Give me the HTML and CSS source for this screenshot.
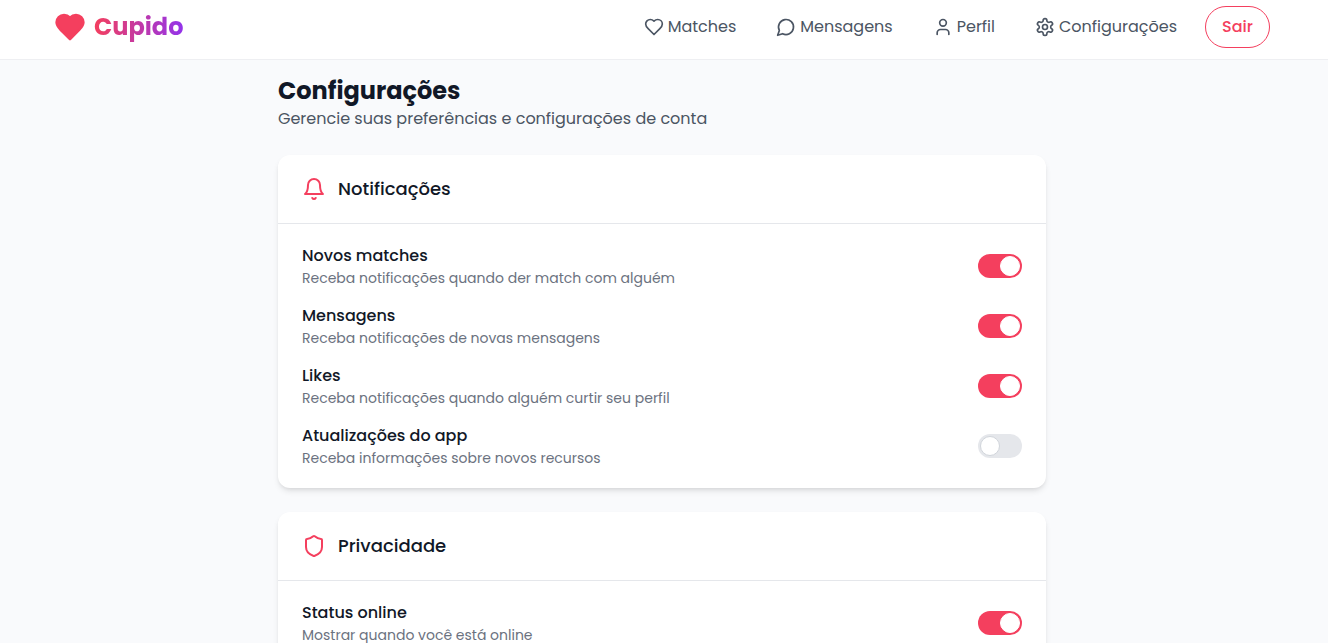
FILE: index.html
```html
<!DOCTYPE html>
<html lang="pt-BR">
<head>
<meta charset="utf-8">
<meta name="viewport" content="width=device-width, initial-scale=1">
<title>Cupido - Configurações</title>
<link rel="stylesheet" href="styles.css">
</head>
<body>
<header class="header">
  <div class="header-inner">
    <a class="brand" href="#">
      <svg class="brand-icon" viewBox="0 0 24 24" aria-hidden="true"><path d="M19 14c1.49-1.46 3-3.21 3-5.5A5.5 5.5 0 0 0 16.5 3c-1.76 0-3 .5-4.5 2-1.5-1.5-2.74-2-4.5-2A5.5 5.5 0 0 0 2 8.5c0 2.3 1.5 4.05 3 5.5l7 7Z"/></svg>
      <span class="brand-name">Cupido</span>
    </a>
    <nav class="nav">
      <a class="nav-link" href="#">
        <svg class="icon" viewBox="0 0 24 24" aria-hidden="true"><path d="M19 14c1.49-1.46 3-3.21 3-5.5A5.5 5.5 0 0 0 16.5 3c-1.76 0-3 .5-4.5 2-1.5-1.5-2.74-2-4.5-2A5.5 5.5 0 0 0 2 8.5c0 2.3 1.5 4.05 3 5.5l7 7Z"/></svg>
        <span>Matches</span>
      </a>
      <a class="nav-link" href="#">
        <svg class="icon" viewBox="0 0 24 24" aria-hidden="true"><path d="M7.9 20A9 9 0 1 0 4 16.1L2 22Z"/></svg>
        <span>Mensagens</span>
      </a>
      <a class="nav-link" href="#">
        <svg class="icon" viewBox="0 0 24 24" aria-hidden="true"><path d="M19 21v-2a4 4 0 0 0-4-4H9a4 4 0 0 0-4 4v2"/><circle cx="12" cy="7" r="4"/></svg>
        <span>Perfil</span>
      </a>
      <a class="nav-link" href="#">
        <svg class="icon" viewBox="0 0 24 24" aria-hidden="true"><path d="M12.22 2h-.44a2 2 0 0 0-2 2v.18a2 2 0 0 1-1 1.73l-.43.25a2 2 0 0 1-2 0l-.15-.08a2 2 0 0 0-2.73.73l-.22.38a2 2 0 0 0 .73 2.73l.15.1a2 2 0 0 1 1 1.72v.51a2 2 0 0 1-1 1.74l-.15.09a2 2 0 0 0-.73 2.73l.22.38a2 2 0 0 0 2.73.73l.15-.08a2 2 0 0 1 2 0l.43.25a2 2 0 0 1 1 1.73V20a2 2 0 0 0 2 2h.44a2 2 0 0 0 2-2v-.18a2 2 0 0 1 1-1.73l.43-.25a2 2 0 0 1 2 0l.15.08a2 2 0 0 0 2.73-.73l.22-.39a2 2 0 0 0-.73-2.73l-.15-.08a2 2 0 0 1-1-1.74v-.5a2 2 0 0 1 1-1.74l.15-.09a2 2 0 0 0 .73-2.73l-.22-.38a2 2 0 0 0-2.73-.73l-.15.08a2 2 0 0 1-2 0l-.43-.25a2 2 0 0 1-1-1.73V4a2 2 0 0 0-2-2z"/><circle cx="12" cy="12" r="3"/></svg>
        <span>Configurações</span>
      </a>
      <button class="logout" type="button">Sair</button>
    </nav>
  </div>
</header>
<main class="main">
  <div class="content">
    <div class="page-heading">
      <h1 class="page-title">Configurações</h1>
      <p class="page-subtitle">Gerencie suas preferências e configurações de conta</p>
    </div>
    <section class="card">
      <div class="card-header">
        <svg class="card-icon" viewBox="0 0 24 24" aria-hidden="true"><path d="M6 8a6 6 0 0 1 12 0c0 7 3 9 3 9H3s3-2 3-9"/><path d="M10.3 21a1.94 1.94 0 0 0 3.4 0"/></svg>
        <h2 class="card-title">Notificações</h2>
      </div>
      <div class="card-body">
        <div class="setting">
          <div>
            <label class="setting-name" for="new-matches">Novos matches</label>
            <p class="setting-text">Receba notificações quando der match com alguém</p>
          </div>
          <input class="toggle" id="new-matches" type="checkbox" role="switch" checked>
        </div>
        <div class="setting">
          <div>
            <label class="setting-name" for="messages">Mensagens</label>
            <p class="setting-text">Receba notificações de novas mensagens</p>
          </div>
          <input class="toggle" id="messages" type="checkbox" role="switch" checked>
        </div>
        <div class="setting">
          <div>
            <label class="setting-name" for="likes">Likes</label>
            <p class="setting-text">Receba notificações quando alguém curtir seu perfil</p>
          </div>
          <input class="toggle" id="likes" type="checkbox" role="switch" checked>
        </div>
        <div class="setting">
          <div>
            <label class="setting-name" for="updates">Atualizações do app</label>
            <p class="setting-text">Receba informações sobre novos recursos</p>
          </div>
          <input class="toggle" id="updates" type="checkbox" role="switch">
        </div>
      </div>
    </section>
    <section class="card">
      <div class="card-header">
        <svg class="card-icon" viewBox="0 0 24 24" aria-hidden="true"><path d="M20 13c0 5-3.5 7.5-7.66 8.95a1 1 0 0 1-.67-.01C7.5 20.5 4 18 4 13V6a1 1 0 0 1 1-1c2 0 4.5-1.2 6.24-2.72a1.17 1.17 0 0 1 1.52 0C14.51 3.81 17 5 19 5a1 1 0 0 1 1 1z"/></svg>
        <h2 class="card-title">Privacidade</h2>
      </div>
      <div class="card-body">
        <div class="setting">
          <div>
            <label class="setting-name" for="online">Status online</label>
            <p class="setting-text">Mostrar quando você está online</p>
          </div>
          <input class="toggle" id="online" type="checkbox" role="switch" checked>
        </div>
      </div>
    </section>
  </div>
</main>
</body>
</html>
```

FILE: styles.css
```css
*,
*::before {
  box-sizing: border-box;
}

body {
  display: flex;
  flex-direction: column;
  height: 100vh;
  margin: 0;
  overflow: hidden;
  background: #f9fafc;
  color: #111827;
  font-family: Poppins, Inter, sans-serif;
  font-size: 16px;
  line-height: 24px;
}

h1,
h2,
p {
  margin: 0;
}

.header {
  flex: none;
  padding: 6px 58px 11px 54px;
  background: #fff;
  border-bottom: 1px solid #eeeff2;
}

.header-inner {
  display: flex;
  align-items: center;
  justify-content: space-between;
  max-width: 1216px;
  margin: 0 auto;
}

.brand {
  display: flex;
  align-items: center;
  gap: 8px;
  text-decoration: none;
}

.brand-icon {
  width: 32px;
  height: 32px;
  fill: #f43f5e;
  stroke: #f43f5e;
  stroke-width: 2;
  stroke-linecap: round;
  stroke-linejoin: round;
}

.brand-name {
  background: linear-gradient(to right, #f43f5e, #9333ea);
  background-clip: text;
  -webkit-background-clip: text;
  color: transparent;
  font-size: 24px;
  font-weight: 700;
  line-height: 32px;
}

.nav {
  display: flex;
  align-items: center;
  gap: 16px;
}

.nav-link {
  display: flex;
  align-items: center;
  gap: 4px;
  padding: 8px 12px;
  color: #4b5563;
  text-decoration: none;
}

.icon {
  width: 20px;
  height: 20px;
}

.icon,
.card-icon {
  flex: none;
  fill: none;
  stroke: currentColor;
  stroke-width: 2;
  stroke-linecap: round;
  stroke-linejoin: round;
}

.logout {
  padding: 8px 16px;
  background: #fff;
  border: 1px solid #f43f5e;
  border-radius: 999px;
  color: #f43f5e;
  font: inherit;
  font-weight: 500;
}

.main {
  flex: 1;
  min-height: 0;
  padding: 15px 4px 24px 0;
  overflow-y: auto;
  scrollbar-width: none;
}

.content {
  display: flex;
  flex-direction: column;
  gap: 24px;
  max-width: 768px;
  margin: 0 auto;
}

.page-title {
  font-size: 24px;
  font-weight: 700;
  line-height: 32px;
}

.page-subtitle {
  color: #4b5563;
}

.card {
  background: #fff;
  border-radius: 12px;
  box-shadow: 0 4px 6px -1px rgb(0 0 0 / 10%), 0 2px 4px -2px rgb(0 0 0 / 10%);
}

.card-header {
  display: flex;
  align-items: center;
  gap: 12px;
  padding: 20px 24px;
  border-bottom: 1px solid #e5e7eb;
}

.card-icon {
  width: 24px;
  height: 24px;
  color: #f43f5e;
}

.card-title {
  font-size: 18px;
  font-weight: 500;
  line-height: 28px;
}

.card-body {
  display: flex;
  flex-direction: column;
  gap: 16px;
  padding: 20px 24px;
}

.setting {
  display: flex;
  align-items: center;
  justify-content: space-between;
}

.setting-name {
  display: block;
  font-weight: 500;
}

.setting-text {
  color: #6b7280;
  font-size: 14px;
  line-height: 20px;
}

.toggle {
  appearance: none;
  display: flex;
  flex: none;
  width: 44px;
  height: 24px;
  margin: 0;
  padding: 2px;
  background: #e5e7eb;
  border-radius: 12px;
}

.toggle::before {
  content: "";
  width: 20px;
  height: 20px;
  background: #fff;
  border: 1px solid #d1d5db;
  border-radius: 50%;
}

.toggle:checked {
  justify-content: flex-end;
  background: #f43f5e;
}

.toggle:checked::before {
  border-color: #fff;
}
```
